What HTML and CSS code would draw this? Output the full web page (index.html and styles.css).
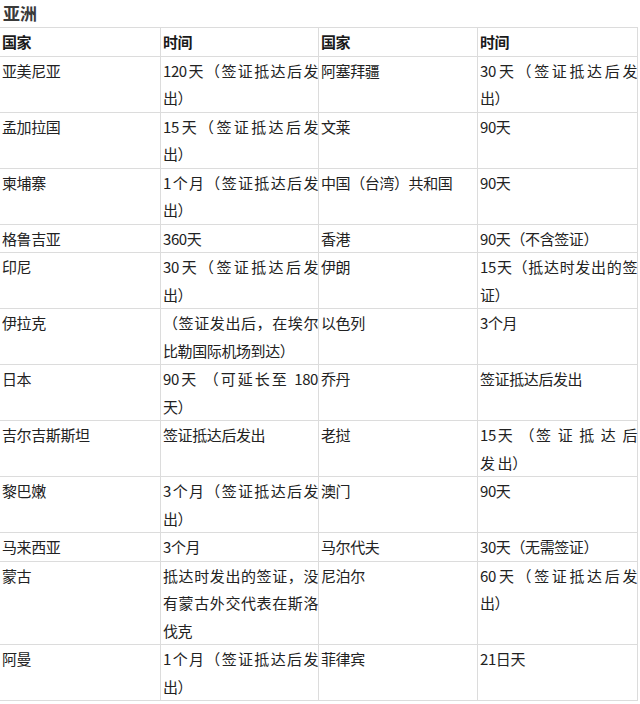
FILE: index.html
```html
<!DOCTYPE html>
<html lang="zh-CN">
<head>
<meta charset="utf-8">
<title>亚洲</title>
<link rel="stylesheet" href="styles.css">
</head>
<body>
<h3 class="region">亚洲</h3>
<table class="visa">
  <colgroup>
    <col class="c1"><col class="c2"><col class="c3"><col class="c4">
  </colgroup>
  <thead>
    <tr><th>国家</th><th>时间</th><th>国家</th><th>时间</th></tr>
  </thead>
  <tbody>
    <tr><td>亚美尼亚</td><td>120天（签证抵达后发出）</td><td>阿塞拜疆</td><td>30天（签证抵达后发出）</td></tr>
    <tr><td>孟加拉国</td><td>15天（签证抵达后发出）</td><td>文莱</td><td>90天</td></tr>
    <tr><td>柬埔寨</td><td>1个月（签证抵达后发出）</td><td>中国（台湾）共和国</td><td>90天</td></tr>
    <tr><td>格鲁吉亚</td><td>360天</td><td>香港</td><td>90天（不含签证）</td></tr>
    <tr><td>印尼</td><td>30天（签证抵达后发出）</td><td>伊朗</td><td>15天（抵达时发出的签证）</td></tr>
    <tr><td>伊拉克</td><td>（签证发出后，在埃尔比勒国际机场到达）</td><td>以色列</td><td>3个月</td></tr>
    <tr><td>日本</td><td>90天 （可延长至 180天）</td><td>乔丹</td><td>签证抵达后发出</td></tr>
    <tr><td>吉尔吉斯斯坦</td><td>签证抵达后发出</td><td>老挝</td><td>15天 （签 证 抵 达 后 发&nbsp;出）</td></tr>
    <tr><td>黎巴嫩</td><td>3个月（签证抵达后发出）</td><td>澳门</td><td>90天</td></tr>
    <tr><td>马来西亚</td><td>3个月</td><td>马尔代夫</td><td>30天（无需签证）</td></tr>
    <tr><td>蒙古</td><td>抵达时发出的签证，没有蒙古外交代表在斯洛伐克</td><td>尼泊尔</td><td>60天（签证抵达后发出）</td></tr>
    <tr><td>阿曼</td><td>1个月（签证抵达后发出）</td><td>菲律宾</td><td>21日天</td></tr>
  </tbody>
</table>
</body>
</html>
```

FILE: styles.css
```css
html, body {
  margin: 0;
  padding: 0;
  background: #ffffff;
}

body {
  font-family: "Noto Sans CJK SC", "Noto Sans", sans-serif;
  color: #222222;
  overflow: hidden;
}

.region {
  margin: 0;
  padding: 2px 0 0 3px;
  height: 25px;
  box-sizing: border-box;
  font-size: 17px;
  line-height: 22px;
  font-weight: bold;
  color: #3a3a3a;
}

.visa {
  border-collapse: collapse;
  table-layout: fixed;
  width: 638px;
  margin-left: -1px;
  margin-top: 2px;
  font-size: 15px;
  letter-spacing: -0.4px;
  line-height: 27.5px;
  text-spacing-trim: space-all;
}

.c1 { width: 161px; }
.c2 { width: 158px; }
.c3 { width: 159px; }
.c4 { width: 160px; }

.visa th,
.visa td {
  border: 1px solid #dcdcdc;
  padding: 0 0 0 2px;
  vertical-align: top;
  text-align: justify;
  font-weight: normal;
}

.visa th {
  font-weight: bold;
  text-align: left;
  color: #1a1a1a;
}
```
